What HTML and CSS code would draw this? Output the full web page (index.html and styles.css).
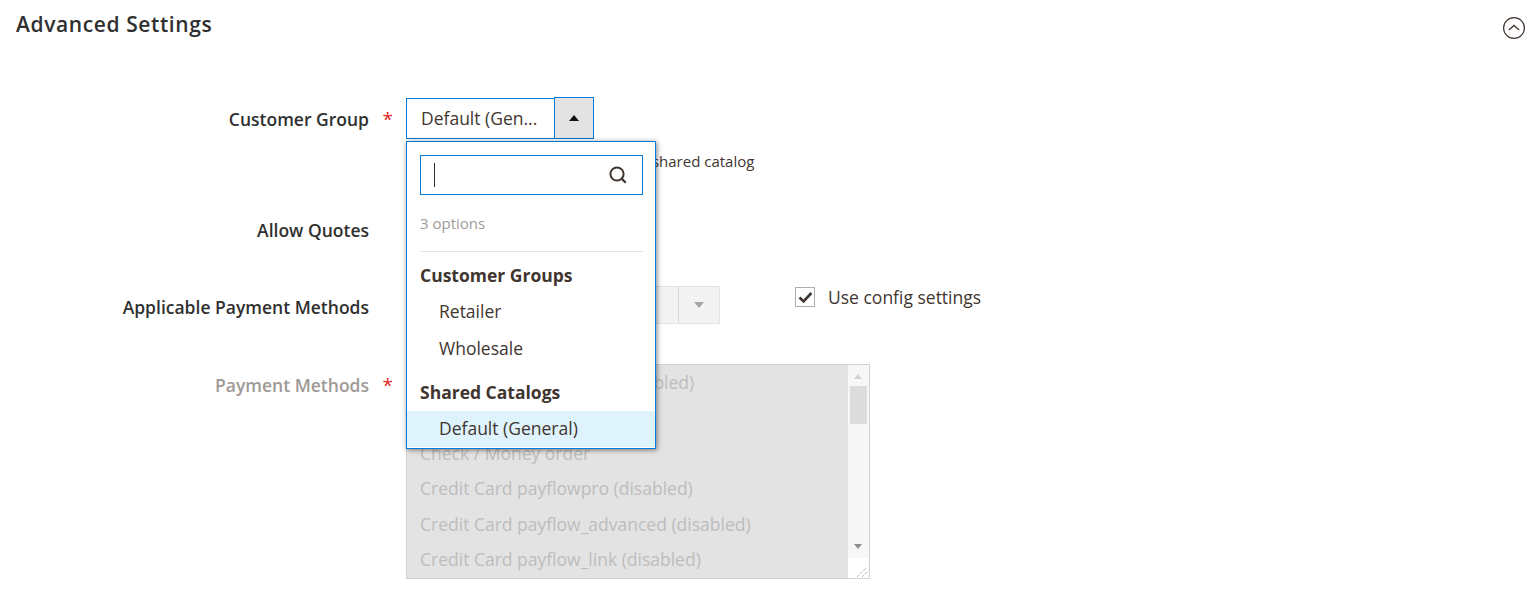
FILE: index.html
```html
<!DOCTYPE html>
<html lang="en">
<head>
    <meta charset="UTF-8">
    <title>Advanced Settings</title>
    <link rel="stylesheet" href="styles.css">
</head>
<body>
    <div class="section-head">
        <h2 class="section-title">Advanced Settings</h2>
        <svg class="collapse-icon" width="24" height="24" viewBox="0 0 24 24">
            <circle cx="12" cy="12" r="10.4" fill="none" stroke="#41362f" stroke-width="1.2"/>
            <path d="M6.8 14 L12 9.4 L17.2 14" fill="none" stroke="#41362f" stroke-width="1.3"/>
        </svg>
    </div>

    <div class="field field-group">
        <div class="field-label">Customer Group<span class="required">*</span></div>
        <div class="field-control">
            <div class="select-wrap">
                <div class="select-value">Default (Gen...</div>
                <div class="select-btn"><span class="caret-up"></span></div>
            </div>
            <div class="note">Customer will now be linked to the shared catalog</div>

            <div class="dropdown">
                <div class="search-box">
                    <span class="text-cursor"></span>
                    <svg width="20" height="20" viewBox="0 0 20 20">
                        <circle cx="9" cy="9" r="6.6" fill="none" stroke="#41362f" stroke-width="2"/>
                        <path d="M13.6 13.6 L17.8 17.8" stroke="#41362f" stroke-width="2.2"/>
                    </svg>
                </div>
                <div class="option-count">3 options</div>
                <div class="option-heading first">Customer Groups</div>
                <div class="option retailer">Retailer</div>
                <div class="option">Wholesale</div>
                <div class="option-heading last">Shared Catalogs</div>
                <div class="option active">Default (General)</div>
            </div>
        </div>
    </div>

    <div class="field field-quotes">
        <div class="field-label">Allow Quotes<span class="required hidden">*</span></div>
    </div>

    <div class="field field-methods">
        <div class="field-label">Applicable Payment Methods<span class="required hidden">*</span></div>
        <div class="field-control row">
            <div class="select-disabled">
                <div class="select-disabled-value"></div>
                <div class="select-disabled-btn"><span class="caret-down"></span></div>
            </div>
            <label class="config-check">
                <span class="checkbox">
                    <svg width="15" height="13" viewBox="0 0 15 13">
                        <path d="M1.5 6.5 L5.6 10.4 L13.4 2" fill="none" stroke="#41362f" stroke-width="2.6"/>
                    </svg>
                </span>
                Use config settings
            </label>
        </div>
    </div>

    <div class="field field-list">
        <div class="field-label muted">Payment Methods<span class="required">*</span></div>
        <div class="field-control">
            <div class="multi-select">
                <div class="multi-options">
                    <div>Bank Transfer Payment (disabled)</div>
                    <div>&nbsp;</div>
                    <div>Check / Money order</div>
                    <div>Credit Card payflowpro (disabled)</div>
                    <div>Credit Card payflow_advanced (disabled)</div>
                    <div>Credit Card payflow_link (disabled)</div>
                </div>
                <div class="scrollbar">
                    <span class="scroll-up"></span>
                    <span class="scroll-thumb"></span>
                    <span class="scroll-down"></span>
                    <span class="resizer">
                        <svg width="12" height="12" viewBox="0 0 12 12">
                            <path d="M1 11 L11 1 M6 11 L11 6" stroke="#999" stroke-width="1" stroke-dasharray="1 1"/>
                        </svg>
                    </span>
                </div>
            </div>
        </div>
    </div>
</body>
</html>
```

FILE: styles.css
```css
* {
    margin: 0;
    padding: 0;
    box-sizing: border-box;
}

body {
    background: white;
    color: #41362f;
    font-family: "Open Sans", sans-serif;
    font-size: 17.5px;
    height: 601px;
    overflow: hidden;
}

.section-head {
    display: flex;
    justify-content: space-between;
    height: 97px;
    padding: 10px 9px 0 16px;
}

.section-title {
    font-size: 21px;
    font-weight: 600;
    letter-spacing: 0.6px;
    line-height: 28px;
    color: #303030;
}

.collapse-icon {
    margin-top: 6px;
}

.field {
    display: flex;
}

.field-label {
    width: 406px;
    flex-shrink: 0;
    text-align: right;
    font-weight: 600;
    line-height: 24px;
    color: #303030;
}

.field-label.muted {
    color: #a09a96;
}

.required {
    display: inline-block;
    width: 37px;
    padding-right: 13px;
    color: #e22626;
    font-size: 19px;
    font-weight: 400;
    line-height: 24px;
    vertical-align: top;
    text-align: right;
}

.hidden {
    visibility: hidden;
}

.field-control {
    position: relative;
}

.field-control.row {
    display: flex;
    align-items: flex-start;
}

.field-group {
    height: 121px;
}

.field-group .field-label {
    padding-top: 10px;
}

.field-quotes {
    height: 68px;
}

.field-methods {
    height: 78px;
}

.field-methods .field-label {
    padding-top: 9px;
}

.field-list .field-label {
    padding-top: 9px;
}

/* closed select */
.select-wrap {
    display: flex;
    width: 188px;
    height: 42px;
    align-items: flex-end;
}

.select-value {
    width: 149px;
    height: 41px;
    padding-left: 14px;
    border: 1px solid #007bdb;
    line-height: 38px;
    white-space: nowrap;
}

.select-btn {
    display: flex;
    align-items: center;
    justify-content: center;
    width: 40px;
    height: 42px;
    margin-left: -1px;
    background: #e3e3e3;
    border: 1px solid #007bdb;
}

.caret-up {
    border-left: 5.5px solid transparent;
    border-right: 5.5px solid transparent;
    border-bottom: 6px solid #111;
}

.note {
    margin-top: 12px;
    font-size: 15px;
    line-height: 20px;
    white-space: nowrap;
}

/* open dropdown */
.dropdown {
    position: absolute;
    top: 44px;
    left: 0;
    z-index: 10;
    width: 250px;
    height: 308px;
    padding: 13px 0 0;
    background: white;
    border: 1px solid #007bdb;
    box-shadow: 1px 1px 5px rgba(0, 0, 0, 0.5);
}

.search-box {
    display: flex;
    align-items: center;
    justify-content: space-between;
    width: 223px;
    height: 40px;
    margin: 0 0 0 13px;
    padding: 0 14px 0 13px;
    border: 1px solid #007bdb;
}

.text-cursor {
    width: 1px;
    height: 24px;
    background: #303030;
}

.option-count {
    width: 223px;
    height: 57px;
    margin-left: 13px;
    padding-top: 18px;
    border-bottom: 1px solid #e3e3e3;
    font-size: 15px;
    line-height: 20px;
    color: #a09a96;
}

.option-heading {
    height: 36px;
    padding-left: 13px;
    font-weight: 700;
    line-height: 36px;
    white-space: nowrap;
}

.option-heading.first {
    margin-top: 5px;
}

.option-heading.last {
    height: 37px;
    margin-top: 8px;
}

.option {
    height: 36px;
    padding-left: 32px;
    line-height: 36px;
}

.option.retailer {
    height: 37px;
}

.option.active {
    line-height: 34px;
    background: #def3fc;
}

/* disabled select */
.select-disabled {
    display: flex;
    width: 314px;
    height: 38px;
    background: #f3f3f3;
    border: 1px solid #e3e3e3;
}

.select-disabled-value {
    flex: 1;
}

.select-disabled-btn {
    display: flex;
    align-items: center;
    justify-content: center;
    width: 41px;
    border-left: 1px solid #d6d6d6;
}

.caret-down {
    border-left: 5.5px solid transparent;
    border-right: 5.5px solid transparent;
    border-top: 6px solid #a5a5a5;
}

.config-check {
    display: flex;
    align-items: center;
    margin: 1px 0 0 75px;
    line-height: 20px;
}

.checkbox {
    display: flex;
    align-items: center;
    justify-content: center;
    width: 20px;
    height: 20px;
    margin-right: 13px;
    background: white;
    border: 1px solid #adadad;
}

/* disabled multi select */
.multi-select {
    display: flex;
    width: 464px;
    height: 215px;
    background: #e3e3e3;
    border: 1px solid #d3d3d3;
}

.multi-options {
    flex: 1;
    padding: 0 13px;
    color: #bdbdbd;
    line-height: 35.4px;
    white-space: nowrap;
}

.scrollbar {
    display: flex;
    flex-direction: column;
    align-items: center;
    width: 21px;
    padding-right: 1px;
    background: #f7f7f7;
}

.scroll-up {
    margin-top: 9px;
    border-left: 4.5px solid transparent;
    border-right: 4.5px solid transparent;
    border-bottom: 5px solid #d3d3d3;
}

.scroll-thumb {
    width: 17px;
    height: 38px;
    margin-top: 7px;
    background: #dcdcdc;
}

.scroll-down {
    margin-top: 120px;
    border-left: 4.5px solid transparent;
    border-right: 4.5px solid transparent;
    border-top: 5px solid #8f8f8f;
}

.resizer {
    display: flex;
    align-items: flex-end;
    justify-content: flex-end;
    width: 100%;
    height: 20px;
    margin-top: auto;
    background: white;
}
```
